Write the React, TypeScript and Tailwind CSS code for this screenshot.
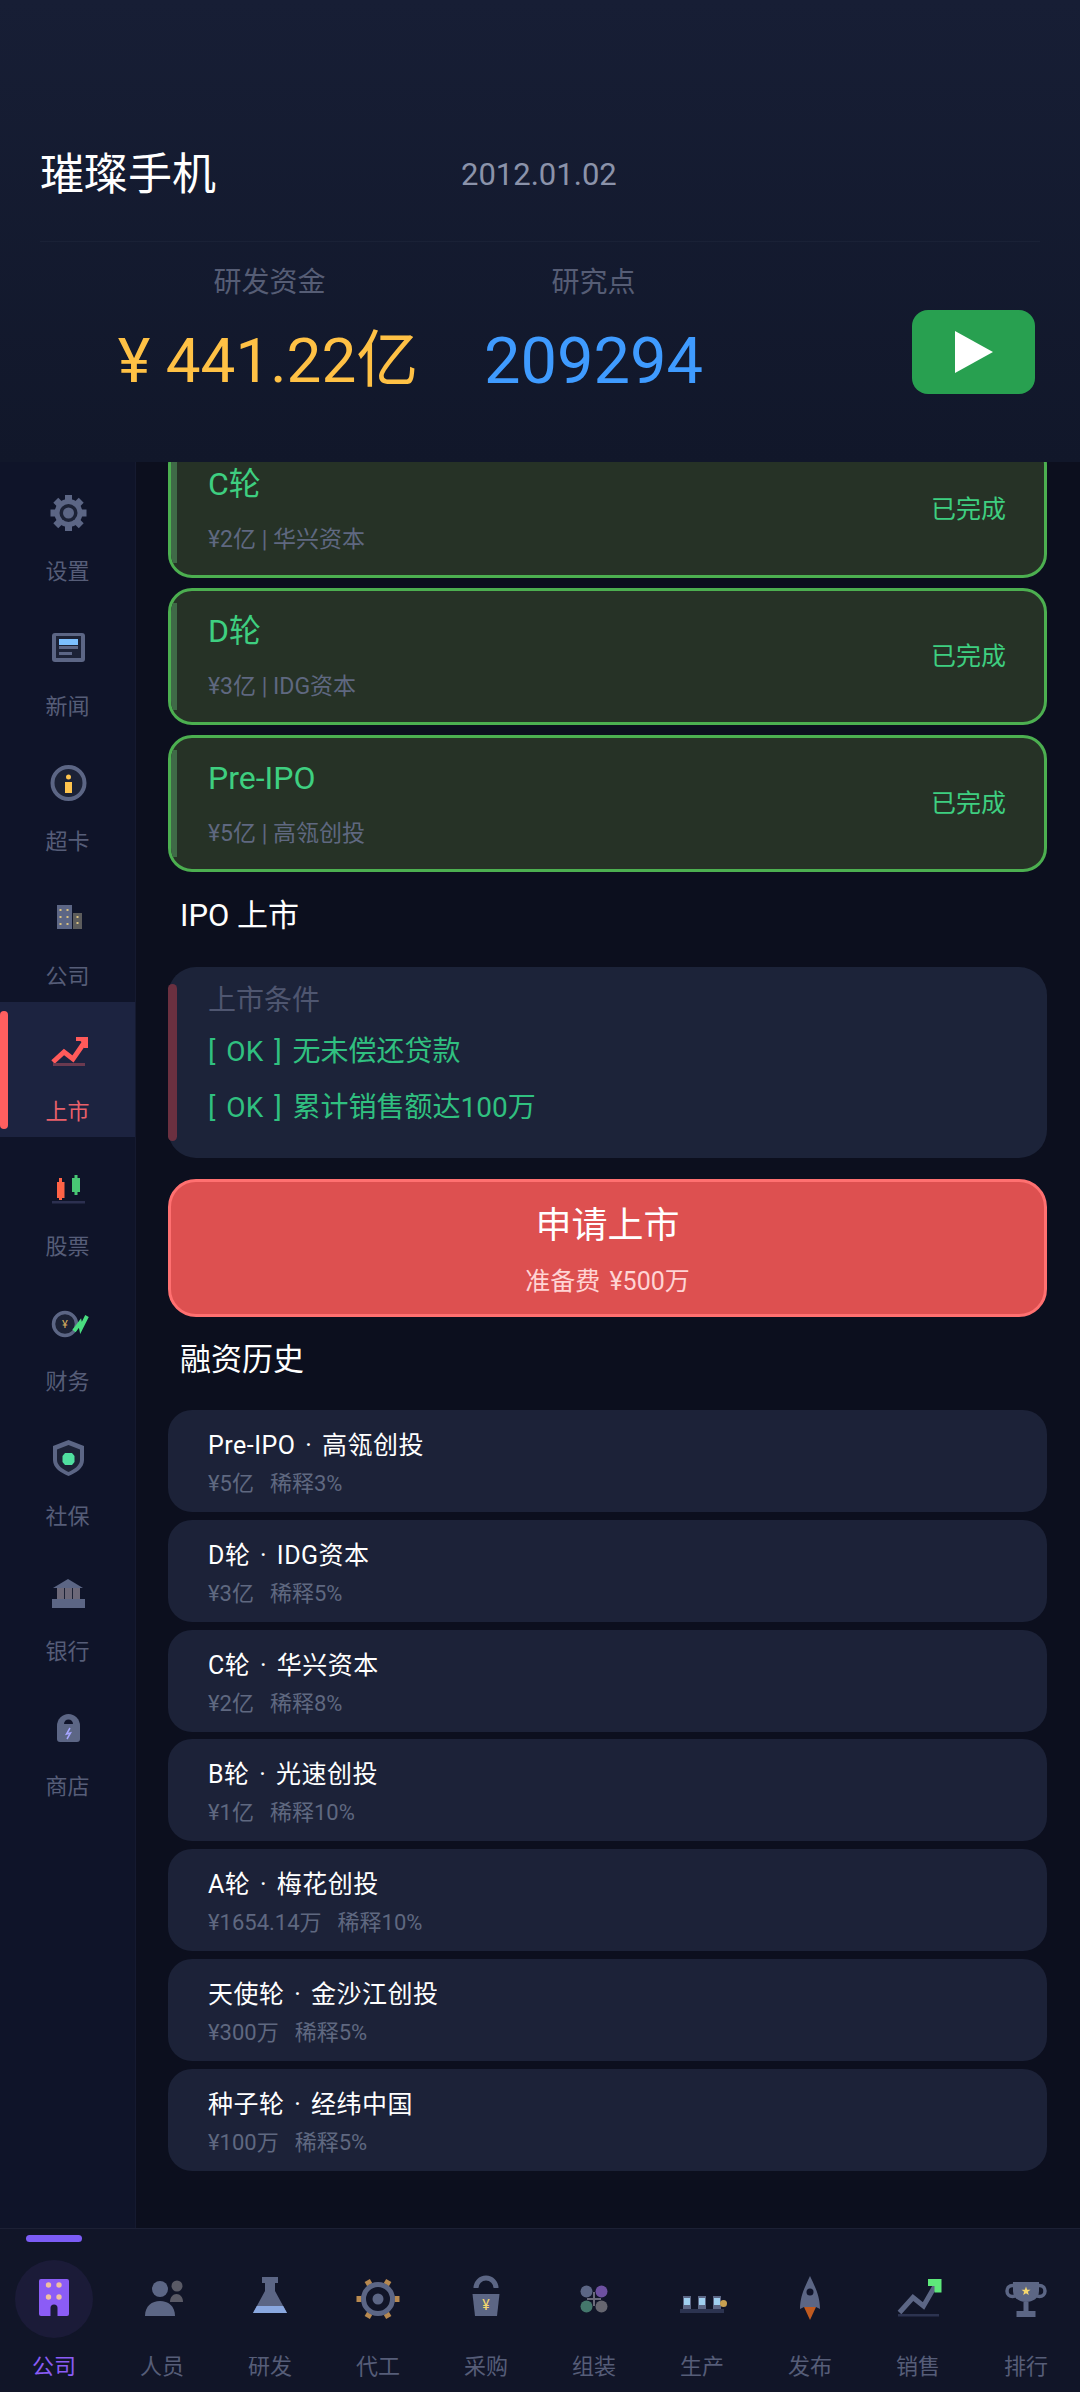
import type { ReactNode } from 'react';

const GRAY = '#5c6685';
const DARK = '#1c2236';

const GearIcon = () => (
  <svg width="48" height="48" viewBox="0 0 48 48">
    {[0, 45, 90, 135].map((r) => (
      <rect key={r} x="21" y="6" width="7" height="36" fill={GRAY} transform={`rotate(${r} 24.5 24)`} />
    ))}
    <circle cx="24.5" cy="24" r="14" fill={GRAY} />
    <circle cx="24.5" cy="24" r="9" fill={DARK} />
    <circle cx="24.5" cy="24" r="5.5" fill={GRAY} />
  </svg>
);

const NewsIcon = () => (
  <svg width="48" height="48" viewBox="0 0 48 48">
    <rect x="8" y="9" width="33" height="29" rx="3" fill={GRAY} />
    <rect x="12" y="12" width="25" height="22" fill={DARK} />
    <rect x="15" y="15" width="19" height="6" fill="#7cc0ff" />
    <rect x="15" y="22" width="19" height="3" fill={GRAY} />
    <rect x="15" y="28" width="13" height="3" fill={GRAY} />
  </svg>
);

const CardIcon = () => (
  <svg width="48" height="48" viewBox="0 0 48 48">
    <circle cx="24.5" cy="24" r="16" fill={DARK} stroke={GRAY} strokeWidth="4" />
    <circle cx="24.5" cy="18" r="2.5" fill="#ffc44d" />
    <rect x="21" y="23" width="7" height="11" fill="#ffc44d" />
  </svg>
);

const CompanyIcon = () => (
  <svg width="48" height="48" viewBox="0 0 48 48">
    <rect x="13" y="11" width="15" height="24" fill={GRAY} />
    <rect x="29" y="19" width="9" height="16" fill="#5c5c5c" />
    {[15, 22, 29].map((y) => (
      <g key={y} fill="#d8c080">
        <rect x="15.5" y={y} width="2" height="2" />
        <rect x="22.5" y={y} width="2" height="2" />
      </g>
    ))}
    <rect x="32.5" y="22" width="2" height="2" fill="#d8c080" />
    <rect x="32.5" y="28" width="2" height="2" fill="#d8c080" />
  </svg>
);

const ListedIcon = () => (
  <svg width="48" height="48" viewBox="0 0 48 48">
    <polyline points="9,33 20,23 29,30 40,14" fill="none" stroke="#ff5a5a" strokeWidth="5" />
    <polygon points="32,8 44,8 44,19" fill="#ff5a5a" />
    <rect x="32" y="8" width="12" height="4" fill="#ff5a5a" />
    <rect x="40" y="8" width="4" height="11" fill="#ff5a5a" />
    <rect x="9" y="34" width="32" height="3" fill="#6b3a50" />
  </svg>
);

const StockIcon = () => (
  <svg width="48" height="48" viewBox="0 0 48 48">
    <rect x="15" y="14" width="3" height="22" fill="#ff6347" />
    <rect x="13" y="18" width="7.5" height="16" fill="#ff6347" />
    <rect x="30.5" y="11" width="3" height="20" fill="#48c774" />
    <rect x="28" y="14" width="8" height="14" fill="#48c774" />
    <rect x="8" y="37" width="33" height="2.5" fill="#2c3050" />
  </svg>
);

const FinanceIcon = () => (
  <svg width="48" height="48" viewBox="0 0 48 48">
    <circle cx="21" cy="25" r="11.5" fill={DARK} stroke={GRAY} strokeWidth="3.5" />
    <text x="21" y="29" fontSize="11" textAnchor="middle" fill="#d8b060">¥</text>
    <polyline points="30,32 36,24 37,29 43,17" fill="none" stroke="#4ade80" strokeWidth="4" />
  </svg>
);

const ShieldIcon = () => (
  <svg width="48" height="48" viewBox="0 0 48 48">
    <path d="M24.5 6L40 12V26C40 34 32 39 24.5 42C17 39 9 34 9 26V12Z" fill={GRAY} />
    <path d="M24.5 11L36 15.500V26C36 31.500 30 35.500 24.500 38C19 35.500 13 31.500 13 26V15.500Z" fill={DARK} />
    <polygon points="21,19 28,19 30.500,22 30.500,28 28,31 21,31 18.500,28 18.500,22" fill="#50e0a0" />
  </svg>
);

const BankIcon = () => (
  <svg width="48" height="48" viewBox="0 0 48 48">
    <polygon points="9,19 24,10 39,19" fill={GRAY} />
    <rect x="13" y="19" width="23" height="11" fill="#6c6878" />
    <rect x="20" y="19" width="1" height="11" fill="#1c2236" />
    <rect x="28" y="19" width="1" height="11" fill="#1c2236" />
    <rect x="8" y="30" width="33" height="9" fill={GRAY} />
  </svg>
);

const ShopIcon = () => (
  <svg width="48" height="48" viewBox="0 0 48 48">
    <path d="M13 22A11.500 12 0 0 1 36 22V35A3 3 0 0 1 33 38H16A3 3 0 0 1 13 35Z" fill={GRAY} />
    <path d="M20 20A4.500 4.500 0 0 1 29 20Z" fill="#10142a" />
    <polyline points="26,24 22.500,30 26.500,29 23,35" fill="none" stroke="#a5a5ff" strokeWidth="1.500" />
  </svg>
);

const NavCompany = () => (
  <svg width="56" height="56" viewBox="0 0 56 56">
    <rect x="13" y="8" width="30" height="37" rx="2" fill="#8b5cf6" />
    {[
      [22.5, 14],
      [33, 14],
      [22.5, 26],
      [33, 26],
    ].map(([cx, cy]) => (
      <circle key={`${cx}-${cy}`} cx={cx} cy={cy} r="2.700" fill="#f0c0a0" />
    ))}
    <path d="M24.500 45V37A3.500 3.500 0 0 1 31.500 37V45Z" fill="#1b1b38" />
  </svg>
);

const NavStaff = () => (
  <svg width="56" height="56" viewBox="0 0 56 56">
    <circle cx="43" cy="15" r="5.500" fill="#5a5a66" />
    <path d="M36 31C36 26 39 23 42.500 23C46 23 49 26 49 31Z" fill="#5a5a66" />
    <circle cx="26" cy="18" r="8" fill={GRAY} />
    <path d="M11 45C11 35 18 30 26 30C34 30 41 35 41 45Z" fill={GRAY} />
  </svg>
);

const NavLab = () => (
  <svg width="56" height="56" viewBox="0 0 56 56">
    <rect x="20" y="6" width="16" height="6" fill={GRAY} />
    <polygon points="23,12 33,12 33,20 45,42 11,42 23,20" fill={GRAY} />
    <polygon points="14.800,35 41.200,35 45,42 11,42" fill="#8aa8e0" />
  </svg>
);

const NavOem = () => (
  <svg width="56" height="56" viewBox="0 0 56 56">
    {[0, 60, 120, 180, 240, 300].map((r) => (
      <rect key={r} x="25" y="6.500" width="6" height="5" fill="#b8894f" transform={`rotate(${r + 30} 28 28)`} />
    ))}
    <circle cx="28" cy="28" r="14.500" fill="none" stroke={GRAY} strokeWidth="5" />
    <circle cx="28" cy="28" r="5.500" fill={GRAY} />
  </svg>
);

const NavBuy = () => (
  <svg width="56" height="56" viewBox="0 0 56 56">
    <path d="M18 17A10 10 0 0 1 38 17" fill="none" stroke={GRAY} strokeWidth="5" />
    <polygon points="14.500,23 41.500,23 39,45 17,45" fill={GRAY} />
    <text x="28" y="39" fontSize="14" textAnchor="middle" fill="#f5d76e">¥</text>
  </svg>
);

const NavAssemble = () => (
  <svg width="56" height="56" viewBox="0 0 56 56">
    <circle cx="20.500" cy="20.500" r="6" fill={GRAY} />
    <circle cx="35.500" cy="20.500" r="6" fill="#6d50a0" />
    <circle cx="20.500" cy="35.500" r="6" fill="#44776c" />
    <circle cx="35.500" cy="35.500" r="6" fill="#666670" />
    <path d="M28 21V35M21 28H35" stroke="#6a6a7a" strokeWidth="2" />
  </svg>
);

const NavProduce = () => (
  <svg width="56" height="56" viewBox="0 0 56 56">
    <rect x="6" y="38" width="44" height="4" fill="#2c3350" />
    {[13, 28, 43].map((cx) => (
      <g key={cx}>
        <rect x={cx - 4} y="25" width="8" height="13" fill={GRAY} />
        <rect x={cx - 3} y="27" width="6" height="7" fill="#a0d0f0" />
      </g>
    ))}
    <circle cx="49.500" cy="32.500" r="3.500" fill="#c8a050" />
  </svg>
);

const NavRelease = () => (
  <svg width="56" height="56" viewBox="0 0 56 56">
    <polygon points="22,36 34,36 28,49" fill="#c05a20" />
    <path d="M28 5C32 14 38 24 38 38L34 36H22L18 38C18 24 24 14 28 5Z" fill={GRAY} />
    <circle cx="28" cy="21" r="3.500" fill="#10142a" />
  </svg>
);

const NavSales = () => (
  <svg width="56" height="56" viewBox="0 0 56 56">
    <polyline points="9.500,41.500 23,26.500 33.500,35 45,15" fill="none" stroke={GRAY} strokeWidth="5" />
    <rect x="8" y="43" width="41" height="2.500" fill="#2c3350" />
    <polygon points="38,8 51.500,8 51.500,21.500 44.500,21.500 44.500,15 38,15" fill="#5ee87a" />
  </svg>
);

const NavRank = () => (
  <svg width="56" height="56" viewBox="0 0 56 56">
    <circle cx="14.500" cy="20" r="5.500" fill="none" stroke={GRAY} strokeWidth="3.500" />
    <circle cx="41.500" cy="20" r="5.500" fill="none" stroke={GRAY} strokeWidth="3.500" />
    <path d="M15 11H41V20C41 27 35 31 28 31C21 31 15 27 15 20Z" fill={GRAY} />
    <rect x="25.500" y="31" width="5" height="10" fill={GRAY} />
    <rect x="18.500" y="40" width="19" height="6" fill={GRAY} />
    <polygon
      points="28,15.500 29.200,18.700 32.500,18.700 29.900,20.800 30.800,24 28,22.200 25.200,24 26.100,20.800 23.500,18.700 26.800,18.700"
      fill="#f5d76e"
    />
  </svg>
);

const sideItems: { label: string; icon: ReactNode; active?: boolean }[] = [
  { label: '设置', icon: <GearIcon /> },
  { label: '新闻', icon: <NewsIcon /> },
  { label: '超卡', icon: <CardIcon /> },
  { label: '公司', icon: <CompanyIcon /> },
  { label: '上市', icon: <ListedIcon />, active: true },
  { label: '股票', icon: <StockIcon /> },
  { label: '财务', icon: <FinanceIcon /> },
  { label: '社保', icon: <ShieldIcon /> },
  { label: '银行', icon: <BankIcon /> },
  { label: '商店', icon: <ShopIcon /> },
];

const navItems: { label: string; icon: ReactNode; active?: boolean }[] = [
  { label: '公司', icon: <NavCompany />, active: true },
  { label: '人员', icon: <NavStaff /> },
  { label: '研发', icon: <NavLab /> },
  { label: '代工', icon: <NavOem /> },
  { label: '采购', icon: <NavBuy /> },
  { label: '组装', icon: <NavAssemble /> },
  { label: '生产', icon: <NavProduce /> },
  { label: '发布', icon: <NavRelease /> },
  { label: '销售', icon: <NavSales /> },
  { label: '排行', icon: <NavRank /> },
];

const rounds = [
  { name: 'C轮', sub: '¥2亿 | 华兴资本' },
  { name: 'D轮', sub: '¥3亿 | IDG资本' },
  { name: 'Pre-IPO', sub: '¥5亿 | 高瓴创投' },
];

const history = [
  { title: 'Pre-IPO · 高瓴创投', amount: '¥5亿', dilution: '稀释3%' },
  { title: 'D轮 · IDG资本', amount: '¥3亿', dilution: '稀释5%' },
  { title: 'C轮 · 华兴资本', amount: '¥2亿', dilution: '稀释8%' },
  { title: 'B轮 · 光速创投', amount: '¥1亿', dilution: '稀释10%' },
  { title: 'A轮 · 梅花创投', amount: '¥1654.14万', dilution: '稀释10%' },
  { title: '天使轮 · 金沙江创投', amount: '¥300万', dilution: '稀释5%' },
  { title: '种子轮 · 经纬中国', amount: '¥100万', dilution: '稀释5%' },
];

const App = () => {
  return (
    <div className="w-[1080px] h-[2392px] flex flex-col overflow-hidden bg-[#0c0f1e] font-['Roboto','Noto_Sans_CJK_SC',sans-serif]">
      {/* Top header */}
      <header className="relative z-10 h-[462px] shrink-0 bg-gradient-to-b from-[#171e35] to-[#11172a] px-[40px]">
        <div className="h-[242px] pt-[143px] flex items-start border-b border-[#1a2136]">
          <h1 className="w-[421px] text-[44px] leading-[64px] text-white">璀璨手机</h1>
          <span className="text-[31px] leading-[64px] text-[#8b93aa]">2012.01.02</span>
        </div>
        <div className="flex">
          <div className="w-[376px] ml-[40px] pt-[21px] flex flex-col items-center">
            <span className="ml-[3px] text-[28px] leading-[40px] text-[#565d75]">研发资金</span>
            <span className="mt-[18px] text-[62px] leading-[80px] whitespace-nowrap text-[#ffc145]">¥ 441.22亿</span>
          </div>
          <div className="w-[217px] ml-[29px] pt-[21px] flex flex-col items-center">
            <span className="text-[28px] leading-[40px] text-[#565d75]">研究点</span>
            <span className="mt-[18px] text-[65px] leading-[80px] text-[#3f9bff]">209294</span>
          </div>
          <div className="ml-auto mr-[5px] mt-[68px] w-[123px] h-[84px] rounded-[16px] bg-[#28a050] flex items-center justify-center">
            <svg width="38" height="42" viewBox="0 0 38 42">
              <polygon points="0,0 38,21 0,42" fill="#ffffff" />
            </svg>
          </div>
        </div>
      </header>

      <div className="flex-1 flex min-h-0">
        {/* Left sidebar */}
        <aside className="w-[136px] shrink-0 bg-[#0f1429] border-r border-[#151a30]">
          {sideItems.map((item) => (
            <div
              key={item.label}
              className={`relative h-[135px] pt-[27px] flex flex-col items-center ${item.active ? 'bg-[#1c2340]' : ''}`}
            >
              {item.active && (
                <div className="absolute left-0 top-[9px] w-[8px] h-[118px] rounded-full bg-[#ff5f5f]" />
              )}
              {item.icon}
              <span
                className={`mt-[20px] text-[22px] leading-[30px] ${item.active ? 'text-[#e8606a]' : 'text-[#565d78]'}`}
              >
                {item.label}
              </span>
            </div>
          ))}
        </aside>

        {/* Main content, scrolled by 21px under the header */}
        <main className="flex-1 min-w-0 pl-[32px] pr-[33px] overflow-hidden">
          <div className="-mt-[21px] flex flex-col gap-[10px]">
            {rounds.map((round) => (
              <div
                key={round.name}
                className="relative h-[137px] rounded-[24px] border-[3px] border-[#4caf50] bg-[#263226] pl-[37px] pr-[38px] flex items-center justify-between overflow-hidden"
              >
                <div className="absolute left-0 top-[12px] bottom-[12px] w-[6px] bg-[#3f6a47]" />
                <div className="flex flex-col">
                  <span className="text-[32px] leading-[44px] text-[#3ecf80]">{round.name}</span>
                  <span className="mt-[17px] text-[23px] leading-[34px] text-[#5f6880]">{round.sub}</span>
                </div>
                <span className="text-[25px] leading-[36px] text-[#3ecf80]">已完成</span>
              </div>
            ))}
          </div>

          <h2 className="mt-[22px] ml-[12px] text-[31px] leading-[44px] text-white">IPO 上市</h2>

          <div className="relative mt-[29px] h-[191px] rounded-[28px] bg-[#1c2339] pl-[40px] pt-[15px]">
            <div className="absolute left-0 top-[17px] bottom-[17px] w-[9px] rounded-full bg-[#6b3040]" />
            <div className="text-[28px] leading-[38px] text-[#4f5670]">上市条件</div>
            <div className="mt-[13px] text-[28px] leading-[38px] [word-spacing:4px] text-[#30c080]">[ OK ] 无未偿还贷款</div>
            <div className="mt-[18px] text-[28px] leading-[38px] [word-spacing:4px] text-[#30c080]">[ OK ] 累计销售额达100万</div>
          </div>

          <button className="mt-[21px] w-full h-[138px] rounded-[28px] border-[3px] border-[#ff7070] bg-[#dd5050] flex flex-col items-center">
            <span className="mt-[19px] text-[36px] leading-[50px] text-white">申请上市</span>
            <span className="mt-[14px] text-[25px] leading-[34px] [word-spacing:3px] text-[#ffd4d4]">准备费 ¥500万</span>
          </button>

          <h2 className="mt-[21px] ml-[12px] text-[31px] leading-[44px] text-white">融资历史</h2>

          <div className="mt-[28px] flex flex-col gap-[7.8px]">
            {history.map((row) => (
              <div key={row.title} className="h-[102px] rounded-[24px] bg-[#1c2238] pl-[40px] pt-[17px]">
                <div className="text-[25px] leading-[38px] tracking-[0.5px] [word-spacing:3px] whitespace-pre text-white">
                  {row.title}
                </div>
                <div className="mt-[2px] flex gap-[16px] text-[22px] leading-[34px] text-[#5f6880]">
                  <span>{row.amount}</span>
                  <span>{row.dilution}</span>
                </div>
              </div>
            ))}
          </div>
        </main>
      </div>

      {/* Bottom navigation */}
      <nav className="h-[164px] shrink-0 flex border-t border-[#1c2035] bg-[#111528]">
        {navItems.map((item) => (
          <div key={item.label} className="relative w-[108px] pt-[42px] flex flex-col items-center">
            {item.active && (
              <>
                <div className="absolute top-[6px] left-[26px] w-[56px] h-[7px] rounded-full bg-[#7c5cf6]" />
                <div className="absolute top-[31px] left-[15px] w-[78px] h-[78px] rounded-full bg-[#1b1b38]" />
              </>
            )}
            <div className="relative">{item.icon}</div>
            <span className={`mt-[25px] text-[22px] leading-[30px] ${item.active ? 'text-[#8b5cf6]' : 'text-[#565d78]'}`}>
              {item.label}
            </span>
          </div>
        ))}
      </nav>
    </div>
  );
};

export default App;
